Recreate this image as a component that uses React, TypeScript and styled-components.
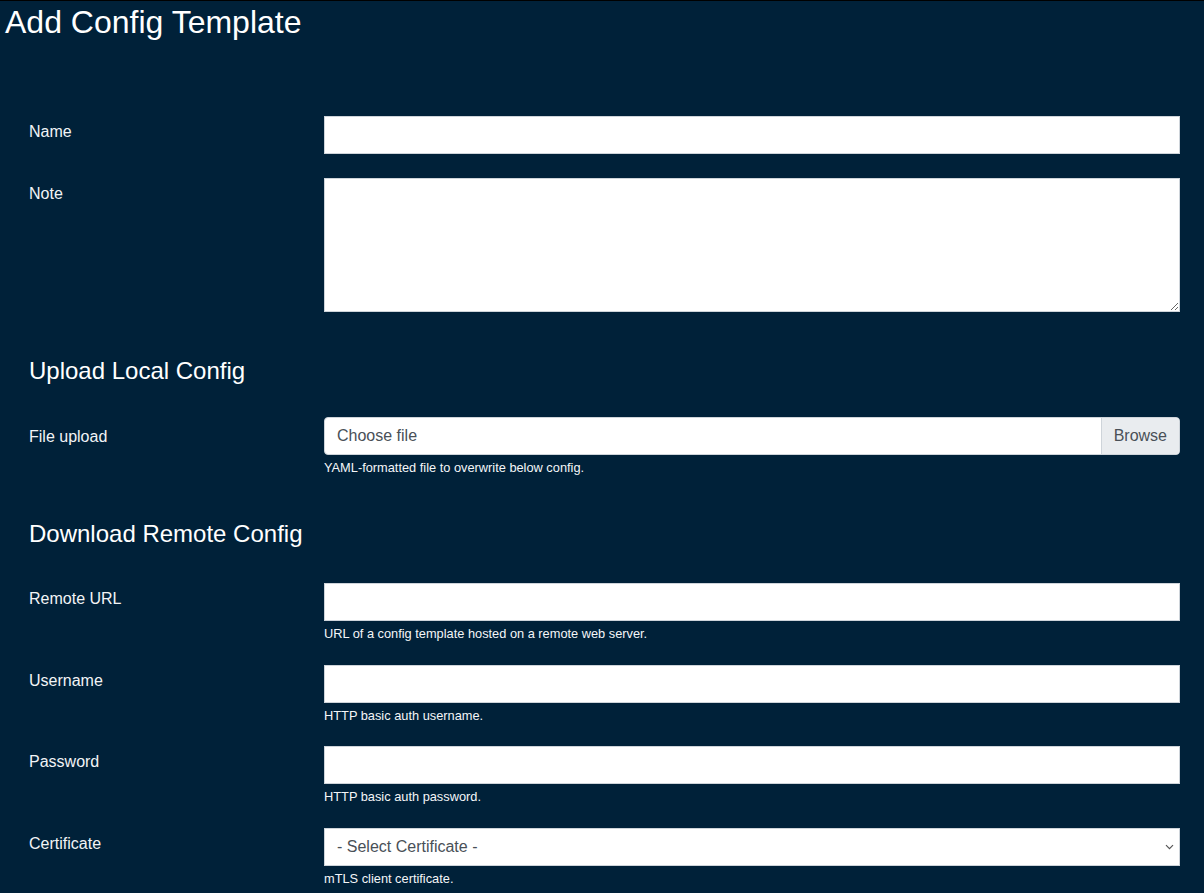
import React from 'react';
import styled, { createGlobalStyle } from 'styled-components';

const GlobalStyle = createGlobalStyle`
  html, body {
    margin: 0;
    padding: 0;
    background: #002139;
  }
  body {
    font-family: "Liberation Sans", Arial, sans-serif;
    color: #fff;
    border-top: 1px solid #000;
  }
`;

const App = (): React.ReactElement => {
  return (
    <>
      <GlobalStyle />
      <Page>
        <Title>Add Config Template</Title>
        <Form>
          <Row>
            <Label htmlFor="name">Name</Label>
            <Field>
              <TextInput id="name" type="text" />
            </Field>
          </Row>
          <Row>
            <Label htmlFor="note">Note</Label>
            <Field>
              <TextArea id="note" />
            </Field>
          </Row>

          <SectionTitle $after={31}>Upload Local Config</SectionTitle>
          <Row>
            <Label $top={8}>File upload</Label>
            <Field>
              <FileBox>
                <FileName>Choose file</FileName>
                <Browse>Browse</Browse>
              </FileBox>
              <Help>YAML-formatted file to overwrite below config.</Help>
            </Field>
          </Row>

          <SectionTitle $after={35}>Download Remote Config</SectionTitle>
          <Row>
            <Label htmlFor="url">Remote URL</Label>
            <Field>
              <TextInput id="url" type="text" />
              <Help>URL of a config template hosted on a remote web server.</Help>
            </Field>
          </Row>
          <Row>
            <Label htmlFor="user">Username</Label>
            <Field>
              <TextInput id="user" type="text" />
              <Help>HTTP basic auth username.</Help>
            </Field>
          </Row>
          <Row>
            <Label htmlFor="pass">Password</Label>
            <Field>
              <TextInput id="pass" type="password" />
              <Help>HTTP basic auth password.</Help>
            </Field>
          </Row>
          <Row>
            <Label htmlFor="cert">Certificate</Label>
            <Field>
              <SelectWrap>
                <Select id="cert" defaultValue="">
                  <option value="">- Select Certificate -</option>
                </Select>
                <Chevron width="9" height="6" viewBox="0 0 9 6">
                  <path d="M1 1.2l3.5 3.5 3.5-3.5" fill="none" stroke="#555" strokeWidth="1.2" />
                </Chevron>
              </SelectWrap>
              <Help>mTLS client certificate.</Help>
            </Field>
          </Row>
        </Form>
      </Page>
    </>
  );
};

const Page = styled.div`
  padding: 2px 24px 0 5px;
`;

const Title = styled.h1`
  margin: 0;
  font-size: 32px;
  font-weight: 400;
  line-height: 1.2;
`;

const Form = styled.form`
  margin-top: 75px;
  padding-left: 24px;
`;

const Row = styled.div`
  display: grid;
  grid-template-columns: 295px 1fr;
  margin-bottom: 24px;
`;

const Label = styled.label<{ $top?: number }>`
  padding-top: ${p => p.$top ?? 4}px;
  font-size: 16px;
  line-height: 24px;
  color: #f2f4f6;
`;

const Field = styled.div`
  display: flex;
  flex-direction: column;
`;

const inputBase = `
  box-sizing: border-box;
  width: 100%;
  border: 1px solid #ced4da;
  background: #fff;
  font-family: "Liberation Sans", Arial, sans-serif;
  font-size: 16px;
  color: #495057;
  outline: none;
`;

const TextInput = styled.input`
  ${inputBase}
  height: 38px;
  padding: 6px 12px;
  border-radius: 0;
`;

const TextArea = styled.textarea`
  ${inputBase}
  display: block;
  height: 134px;
  padding: 6px 12px;
  border-radius: 0;
  resize: vertical;
`;

const FileBox = styled.div`
  box-sizing: border-box;
  display: flex;
  height: 38px;
  border: 1px solid #ced4da;
  border-radius: 4px;
  background: #fff;
  overflow: hidden;
`;

const FileName = styled.span`
  flex: 1;
  padding: 0 12px;
  font-size: 16px;
  line-height: 36px;
  color: #495057;
`;

const Browse = styled.span`
  padding: 0 12px;
  border-left: 1px solid #ced4da;
  background: #e9ecef;
  font-size: 16px;
  line-height: 36px;
  color: #495057;
`;

const SelectWrap = styled.div`
  position: relative;
`;

const Select = styled.select`
  ${inputBase}
  display: block;
  height: 38px;
  padding: 0 32px 0 12px;
  border-radius: 0;
  appearance: none;
  -webkit-appearance: none;
`;

const Chevron = styled.svg`
  position: absolute;
  right: 6px;
  top: 16px;
  pointer-events: none;
`;

const Help = styled.small`
  margin-top: 6px;
  font-size: 12.8px;
  line-height: 13.5px;
  color: #f4f6f8;
`;

const SectionTitle = styled.h3<{ $after: number }>`
  margin: 45px 0 ${p => p.$after}px;
  font-size: 24px;
  font-weight: 400;
  line-height: 1.2;
`;

export default App;
